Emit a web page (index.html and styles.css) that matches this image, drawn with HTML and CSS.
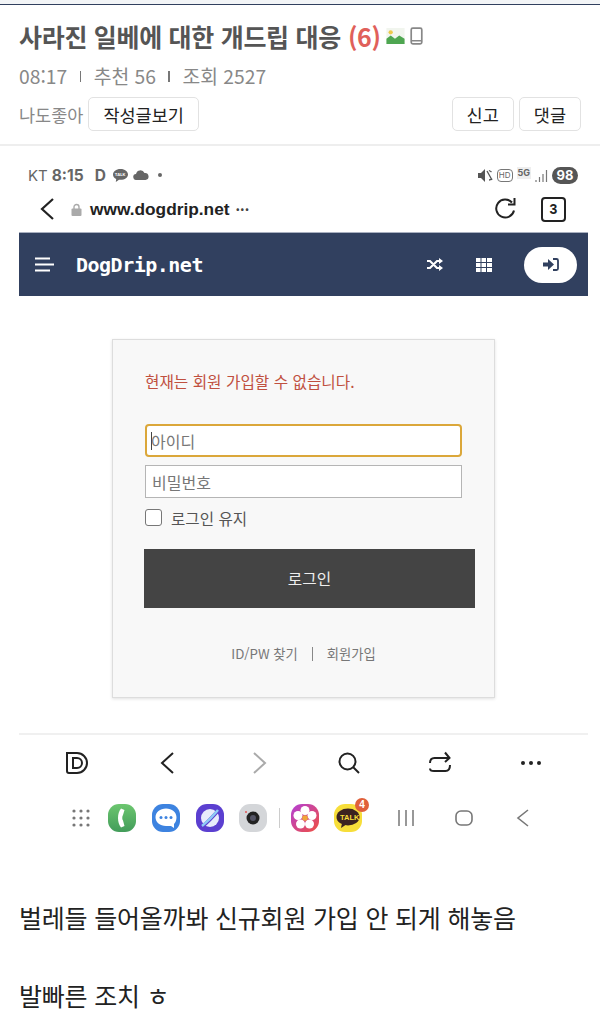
FILE: index.html
```html
<!DOCTYPE html>
<html lang="ko">
<head>
  <meta charset="UTF-8">
  <title>사라진 일베에 대한 개드립 대응</title>
  <meta name="viewport" content="width=device-width, initial-scale=1">
  <link rel="stylesheet" href="styles.css">
</head>
<body>
  <div class="top-strip"></div>

  <header class="post-head">
    <h1 class="post-title">
      <span>사라진 일베에 대한 개드립 대응</span>
      <span class="count">(6)</span>
      <svg class="title-icon" width="19" height="16" viewBox="0 0 17 15"><rect width="17" height="15" fill="#f1f5ee"/><circle cx="4" cy="4" r="2" fill="#ecc94b"/><path d="M0 15V10l4-3 4 3 4-3 5 3v5z" fill="#4ea651"/></svg>
      <svg class="title-icon" width="13" height="18" viewBox="0 0 12 17"><rect x="1" y="1" width="10" height="15" rx="1.500" fill="none" stroke="#888" stroke-width="1.600"/><path d="M1 13h10" stroke="#888" stroke-width="1.400"/></svg>
    </h1>
    <div class="post-meta">
      <span>08:17</span><i class="sep"></i><span>추천 56</span><i class="sep"></i><span>조회 2527</span>
    </div>
    <div class="post-actions">
      <span class="like-label">나도좋아</span>
      <button class="btn">작성글보기</button>
      <button class="btn btn-push">신고</button>
      <button class="btn">댓글</button>
    </div>
  </header>

  <section class="shot">
    <div class="status-bar">
      <div class="status-left">
        <span class="carrier">KT</span>
        <b class="clock">8:15</b>
        <b class="clock-d">D</b>
        <span class="talk-status">
          <svg width="17" height="15" viewBox="0 0 17 15"><path d="M8.500 1C4 1 1 3.500 1 6.500c0 2 1.300 3.600 3.200 4.500L3.800 14l3.200-2.300c.5.100 1 .100 1.500.100 4.500 0 7.500-2.400 7.500-5.300S13 1 8.500 1z" fill="#666"/></svg>
          <span class="talk-tiny">TALK</span>
        </span>
        <svg width="16" height="10" viewBox="0 0 16 10"><path d="M3.500 10a3 3 0 0 1-.5-6 4.500 4.500 0 0 1 8.500-1 3.500 3.500 0 0 1 1 7z" fill="#666"/></svg>
        <i class="status-dot"></i>
      </div>
      <div class="status-right">
        <svg width="15" height="13" viewBox="0 0 15 13"><path d="M0 4h3l4-4v13L3 9H0z" fill="#555"/><path d="M9 2l5 9M11 1.500c1 .5 2 1 2.500 1.500M11 11c1 0 2-.5 3-1.500" stroke="#555" stroke-width="1.300" fill="none"/></svg>
        <span class="hd">HD</span>
        <span class="fiveg">5G</span>
        <svg width="13" height="13" viewBox="0 0 13 13"><path d="M1 11v2M4.500 8v5M8 5v8M11.500 1v12" stroke="#777" stroke-width="1.200"/></svg>
        <span class="battery">98</span>
      </div>
    </div>

    <div class="url-bar">
      <svg class="url-back" width="16" height="24" viewBox="0 0 16 24"><path d="M14 2L3 12l11 10" fill="none" stroke="#222" stroke-width="2.200"/></svg>
      <svg class="lock" width="11" height="13" viewBox="0 0 11 13"><path d="M3 6V4a2.500 2.500 0 0 1 5 0v2" fill="none" stroke="#aaa" stroke-width="1.400"/><rect y="5.500" x=".5" width="10" height="7.500" rx="1" fill="#aaa"/></svg>
      <span class="url-text">www.dogdrip.net</span>
      <span class="url-more">···</span>
      <svg class="reload" width="24" height="24" viewBox="0 0 24 24"><path d="M20 13.500A9 9 0 1 1 18 5.500" fill="none" stroke="#222" stroke-width="2"/><path d="M20.500 1v6.500H14" fill="none" stroke="#222" stroke-width="2"/></svg>
      <span class="tab-count">3</span>
    </div>

    <nav class="site-nav">
      <svg width="19" height="15" viewBox="0 0 19 15"><path d="M0 1.500h15M0 7.500h19M0 13.500h15" stroke="#fff" stroke-width="2"/></svg>
      <span class="logo">DogDrip.net</span>
      <svg class="nav-shuffle" width="16" height="13" viewBox="0 0 16 13"><path d="M0 3h3l7 7h3M0 10h3l7-7h3" fill="none" stroke="#fff" stroke-width="2.200"/><path d="M12 0l4 3-4 3zM12 7l4 3-4 3z" fill="#fff"/></svg>
      <svg class="nav-grid" width="16" height="14" viewBox="0 0 16 14"><path d="M0 0h4.500v4H0zM5.500 0H10v4H5.500zM11 0h5v4h-5zM0 5h4.500v4H0zM5.500 5H10v4H5.500zM11 5h5v4h-5zM0 10h4.500v4H0zM5.500 10H10v4H5.500zM11 10h5v4h-5z" fill="#fff"/></svg>
      <span class="login-pill">
        <svg width="16" height="13" viewBox="0 0 16 13"><path d="M0 4.500h5V1l6 5.500L5 12V8.500H0z" fill="#31405f"/><path d="M10 1h3.500A1.500 1.500 0 0 1 15 2.500v8a1.500 1.500 0 0 1-1.500 1.500H10" fill="none" stroke="#31405f" stroke-width="1.800"/></svg>
      </span>
    </nav>

    <div class="login-wrap">
      <form class="login-card">
        <p class="login-msg">현재는 회원 가입할 수 없습니다.</p>
        <div class="field field-focus"><i class="caret"></i>아이디</div>
        <div class="field">비밀번호</div>
        <label class="keep"><i class="check"></i>로그인 유지</label>
        <button type="button" class="login-btn">로그인</button>
        <div class="login-links"><span>ID/PW 찾기</span><i class="link-sep"></i><span>회원가입</span></div>
      </form>
    </div>

    <div class="toolbar">
      <svg width="24" height="24" viewBox="0 0 24 24"><path d="M2 2h10a10 10 0 0 1 0 20H4a2 2 0 0 1-2-2z" fill="none" stroke="#222" stroke-width="2"/><path d="M8 7h4a5 5 0 0 1 0 10H8z" fill="none" stroke="#222" stroke-width="2"/></svg>
      <svg width="24" height="24" viewBox="0 0 24 24"><path d="M17 2L6 12l11 10" fill="none" stroke="#222" stroke-width="2"/></svg>
      <svg width="24" height="24" viewBox="0 0 24 24"><path d="M7 2l11 10L7 22" fill="none" stroke="#aaa" stroke-width="2"/></svg>
      <svg width="24" height="24" viewBox="0 0 24 24"><circle cx="10.500" cy="10.500" r="8" fill="none" stroke="#222" stroke-width="2"/><path d="M16 16l6 6" stroke="#222" stroke-width="2"/></svg>
      <svg width="24" height="24" viewBox="0 0 24 24"><path d="M2 12c0-3 1.500-5 4.500-5H21M17 1.500L21.500 7 17 11" fill="none" stroke="#222" stroke-width="2"/><path d="M22 14c0 4-1.500 6-4.500 6H6c-2.500 0-4-1-4-2.500" fill="none" stroke="#222" stroke-width="2"/></svg>
      <svg width="24" height="24" viewBox="0 0 24 24"><circle cx="4" cy="12" r="2" fill="#222"/><circle cx="12" cy="12" r="2" fill="#222"/><circle cx="20" cy="12" r="2" fill="#222"/></svg>
    </div>

    <div class="dock">
      <svg class="dock-dots" width="18" height="18" viewBox="0 0 18 18" fill="#777"><circle cx="2" cy="2" r="1.600"/><circle cx="9" cy="2" r="1.600"/><circle cx="16" cy="2" r="1.600"/><circle cx="2" cy="9" r="1.600"/><circle cx="9" cy="9" r="1.600"/><circle cx="16" cy="9" r="1.600"/><circle cx="2" cy="16" r="1.600"/><circle cx="9" cy="16" r="1.600"/><circle cx="16" cy="16" r="1.600"/></svg>
      <span class="app app-phone"><svg width="28" height="28" viewBox="0 0 28 28"><path d="M13 4.500c-4 4.500-4 14.500 0 19l3.500-1.500-1.500-5.500c-1-1-1-4 0-5.500l1.500-5z" fill="#fff"/></svg></span>
      <span class="app app-msg"><svg width="28" height="28" viewBox="0 0 28 28"><path d="M14 4.500c-6 0-10.500 3.800-10.500 8.700 0 5 4.500 8.700 10.500 8.700h5l3 2.100v-4c1.500-1.500 2.500-4 2.500-6.800 0-4.900-4.500-8.700-10.500-8.700z" fill="#fff"/><circle cx="9" cy="13.500" r="1.500" fill="#3d83e0"/><circle cx="14" cy="13.500" r="1.500" fill="#3d83e0"/><circle cx="19" cy="13.500" r="1.500" fill="#3d83e0"/></svg></span>
      <span class="app app-web"><svg width="28" height="28" viewBox="0 0 28 28"><circle cx="14" cy="14" r="9" fill="#e8ecfb"/><path d="M4 24C9 21 19 11 24 4" stroke="#5b3fd0" stroke-width="3.500" fill="none"/><path d="M6 22C11 18 18 11 22 6" stroke="#8ecbf5" stroke-width="2.500" fill="none"/></svg></span>
      <span class="app app-cam"><svg width="28" height="28" viewBox="0 0 28 28"><circle cx="14" cy="14" r="6.500" fill="#222"/><circle cx="14" cy="14" r="3" fill="#556"/><circle cx="7" cy="8" r="1" fill="#e25555"/></svg></span>
      <i class="dock-sep"></i>
      <span class="app app-gallery"><svg width="28" height="28" viewBox="0 0 28 28" fill="#fff"><circle cx="14" cy="6.500" r="4.500"/><circle cx="21" cy="11.500" r="4.500"/><circle cx="18.500" cy="20" r="4.500"/><circle cx="9.500" cy="20" r="4.500"/><circle cx="7" cy="11.500" r="4.500"/><circle cx="14" cy="14" r="2.800" fill="#f0a63a"/></svg></span>
      <span class="app app-talk">
        <svg width="28" height="28" viewBox="0 0 28 28"><ellipse cx="14" cy="13" rx="11.500" ry="8.500" fill="#3c2320"/><path d="M8 19l-1 5 6-4z" fill="#3c2320"/></svg>
        <span class="talk-label">TALK</span>
        <span class="badge">4</span>
      </span>
      <svg class="sys-recent" width="18" height="16" viewBox="0 0 18 16"><path d="M2 0v16M9 0v16M16 0v16" stroke="#777" stroke-width="1.500"/></svg>
      <svg class="sys-home" width="18" height="16" viewBox="0 0 18 16"><rect x="1" y="1" width="16" height="14" rx="5" fill="none" stroke="#777" stroke-width="1.600"/></svg>
      <svg class="sys-back" width="14" height="18" viewBox="0 0 14 18"><path d="M12 1L2 9l10 8" fill="none" stroke="#777" stroke-width="1.600"/></svg>
    </div>
  </section>

  <p class="body-text first">벌레들 들어올까봐 신규회원 가입 안 되게 해놓음</p>
  <p class="body-text">발빠른 조치 ㅎ</p>
</body>
</html>
```

FILE: styles.css
```css
body {
  margin: 0;
  background: #fff;
  color: #333;
  font-family: "Noto Sans CJK KR", "Noto Sans", sans-serif;
  overflow: hidden;
}

.top-strip {
  height: 4px;
  background: #f3f5f7;
  border-bottom: 1px solid #31405f;
}

.post-head {
  height: 125px;
  padding: 14px 19px 0;
  border-bottom: 2px solid #eee;
}

.post-title {
  display: flex;
  align-items: center;
  gap: 5px;
  margin: 0;
  height: 34px;
  font-size: 25px;
  font-weight: 700;
  letter-spacing: -0.3px;
  color: #555;
}

.count {
  margin-left: 2px;
  color: #e0605a;
}

.title-icon {
  flex: none;
}

.post-meta {
  display: flex;
  align-items: center;
  margin-top: 8px;
  height: 30px;
  font-size: 19.300px;
  color: #888;
}

.sep {
  width: 1.500px;
  height: 11px;
  margin: 0 12.500px;
  background: #777;
}

.post-actions {
  display: flex;
  align-items: center;
  gap: 5px;
  margin-top: 6px;
}

.like-label {
  font-size: 17.500px;
  color: #888;
}

.btn {
  height: 34px;
  padding: 0 14px;
  font-family: inherit;
  font-size: 17.500px;
  color: #222;
  background: #fff;
  border: 1px solid #e2e2e2;
  border-radius: 5px;
}

.btn-push {
  margin-left: auto;
}

.shot {
  padding-right: 12px;
}

.status-bar {
  display: flex;
  justify-content: space-between;
  align-items: center;
  height: 22px;
  margin-top: 18px;
  padding: 0 10px 0 28px;
  font-family: "Inter", "Liberation Sans", sans-serif;
  color: #666;
}

.status-left,
.status-right {
  display: flex;
  align-items: center;
  gap: 4px;
}

.carrier {
  font-size: 15px;
}

.clock {
  font-size: 15.500px;
  margin-right: 7px;
}

.clock-d {
  font-size: 15.500px;
  margin-right: 2px;
}

.talk-status {
  position: relative;
  display: flex;
}

.talk-tiny {
  position: absolute;
  top: 4px;
  left: 3px;
  font-size: 4px;
  line-height: 5px;
  font-weight: 700;
  color: #fff;
}

.status-dot {
  width: 4px;
  height: 4px;
  margin-left: 5px;
  border-radius: 50%;
  background: #666;
}

.hd {
  padding: 0 1px;
  font-size: 8px;
  line-height: 11px;
  border: 1px solid #777;
  border-radius: 4px;
}

.fiveg {
  font-size: 9px;
  font-weight: 700;
  line-height: 12px;
  padding: 0 1px;
  margin-top: -4px;
  background: #eee;
}

.battery {
  padding: 0 4.500px;
  font-size: 13px;
  font-weight: 700;
  line-height: 17px;
  color: #fff;
  background: #555;
  border-radius: 9px;
}

.url-bar {
  display: flex;
  align-items: center;
  height: 38px;
  margin-top: 4px;
  padding: 0 22px 0 39px;
}

.lock {
  margin: 0 8px 0 16px;
}

.url-text {
  font-family: "Liberation Sans", sans-serif;
  font-size: 17.300px;
  font-weight: 700;
  color: #222;
}

.url-more {
  margin-left: 6px;
  font-size: 14px;
  font-weight: 700;
  color: #444;
}

.reload {
  margin-left: auto;
}

.tab-count {
  width: 21px;
  height: 21px;
  margin-left: 23px;
  font-family: "Liberation Sans", sans-serif;
  font-size: 14px;
  font-weight: 700;
  line-height: 21px;
  text-align: center;
  color: #222;
  border: 2px solid #222;
  border-radius: 4px;
}

.site-nav {
  display: flex;
  align-items: center;
  height: 64px;
  margin: 4px 0 0 19px;
  padding: 0 11px 0 16px;
  background: #31405f;
  border-top: 1px solid #a9b0c0;
  box-sizing: border-box;
}

.logo {
  margin-left: 22px;
  font-family: "DejaVu Sans Mono", monospace;
  font-size: 20px;
  font-weight: 700;
  letter-spacing: -0.5px;
  color: #fff;
}

.nav-shuffle {
  margin-left: auto;
}

.nav-grid {
  margin: 0 32px 0 33px;
}

.login-pill {
  display: flex;
  justify-content: center;
  align-items: center;
  width: 53px;
  height: 36px;
  background: #fff;
  border-radius: 18px;
}

.login-wrap {
  padding: 43px 0 35px 112px;
}

.login-card {
  width: 317px;
  height: 293px;
  padding: 32px;
  background: #f8f8f8;
  border: 1px solid #ddd;
  box-shadow: 0 1px 3px rgba(0, 0, 0, 0.12);
}

.login-msg {
  margin: 0 0 32px;
  font-size: 15.700px;
  line-height: 20px;
  color: #c0503f;
}

.field {
  position: relative;
  display: flex;
  align-items: center;
  height: 33px;
  padding-left: 6px;
  box-sizing: border-box;
  margin-bottom: 8px;
  font-size: 16px;
  color: #777;
  background: #fff;
  border: 1px solid #b5b5b5;
}

.field-focus {
  padding-left: 4px;
  border: 2px solid #dba73a;
  border-radius: 4px;
}

.caret {
  width: 1px;
  height: 18px;
  margin-right: -1px;
  background: #444;
}

.keep {
  display: flex;
  align-items: center;
  height: 23px;
  font-size: 15.600px;
  color: #555;
}

.check {
  width: 15px;
  height: 15px;
  margin-right: 9px;
  background: #fff;
  border: 1px solid #777;
  border-radius: 3px;
}

.login-btn {
  display: block;
  width: 331px;
  height: 59px;
  margin: 20px 0 0 -1px;
  font-family: inherit;
  font-size: 15.700px;
  color: #eee;
  background: #444;
  border: 0;
}

.login-links {
  display: flex;
  justify-content: center;
  align-items: center;
  gap: 14px;
  margin-top: 36px;
  font-size: 13.300px;
  color: #777;
}

.link-sep {
  width: 1px;
  height: 14px;
  background: #888;
}

.toolbar {
  display: flex;
  justify-content: space-between;
  align-items: center;
  height: 55px;
  margin-left: 19px;
  padding: 0 45px 0 46px;
  border-top: 2px solid #f0f0f0;
}

.dock {
  display: flex;
  align-items: center;
  height: 34px;
  margin-top: 11px;
  padding-left: 72px;
}

.app {
  position: relative;
  display: flex;
  justify-content: center;
  align-items: center;
  width: 28px;
  height: 28px;
  margin-right: 16px;
  border-radius: 11px;
}

.dock-dots {
  margin-right: 18px;
}

.app-phone { background: linear-gradient(#6cc66f, #429c5a); }
.app-msg { background: #3d83e0; }
.app-web { background: #5b3fd0; margin-right: 15px; }
.app-cam { background: #d4d6d9; margin-right: 0; }
.app-gallery { background: linear-gradient(135deg, #b33fd8, #f0503f); margin-right: 15px; }
.app-talk { background: #f7de3a; margin-right: 0; }

.dock-sep {
  width: 1px;
  height: 20px;
  margin: 0 11px 0 12px;
  background: #ccc;
}

.talk-label {
  position: absolute;
  top: 9px;
  left: 6px;
  font-family: "Liberation Sans", sans-serif;
  font-size: 7.500px;
  font-weight: 700;
  color: #f7de3a;
}

.badge {
  position: absolute;
  top: -6px;
  right: -7px;
  width: 14px;
  height: 14px;
  font-family: "Liberation Sans", sans-serif;
  font-size: 10px;
  font-weight: 700;
  line-height: 14px;
  text-align: center;
  color: #fff;
  background: #e0603a;
  border-radius: 50%;
}

.sys-recent {
  margin-left: 35px;
}

.sys-home {
  margin-left: 40px;
}

.sys-back {
  margin-left: 43px;
}

.body-text {
  margin: 0;
  padding-left: 19px;
  font-size: 25px;
  letter-spacing: -0.2px;
  line-height: 32px;
  color: #222;
}

.body-text.first {
  margin-top: 66px;
  margin-bottom: 46px;
}
```
